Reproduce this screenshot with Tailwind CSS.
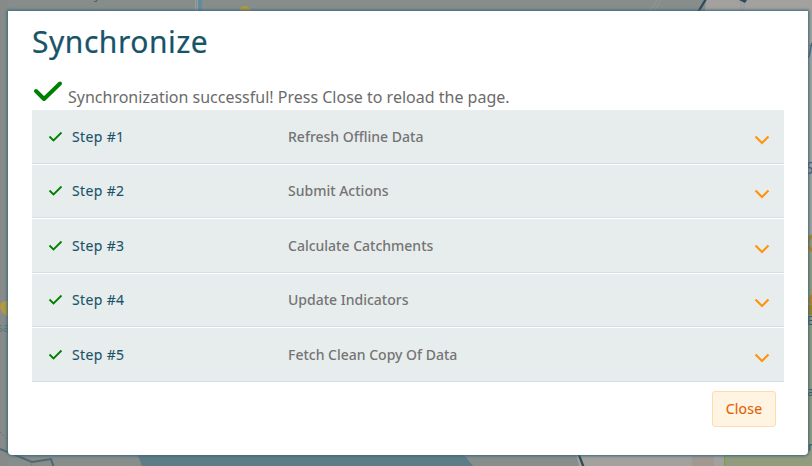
<!DOCTYPE html>
<html lang="en">
<head>
<meta charset="utf-8">
<title>Synchronize</title>
<script src="https://cdn.jsdelivr.net/npm/@tailwindcss/browser@4"></script>
</head>
<body class="relative h-[466px] w-[812px] overflow-hidden bg-[#868d8b] font-['Noto_Sans',sans-serif]">
<svg class="absolute inset-0" width="812" height="466" viewBox="0 0 812 466" aria-hidden="true">
  <path d="M706 0H812V240H806V466H579L572 440H660Z" fill="#a3a19d"/>
  <path d="M0 0H8V466H0Z" fill="#868b89"/>
  <path d="M692 455h22v11h-22z" fill="#a09891"/>
  <path d="M724 450H812V236H806V450" fill="#929b7d"/>
  <path d="M724 450H812V466H724Z" fill="#929b7d"/>
  <path d="M724.5 450v16" stroke="#74a33b"/>
  <path d="M136 450H460L473 466H142Z" fill="#5d7c86"/>
  <path d="M200 0v12" stroke="#628c9c" stroke-width="4"/>
  <path d="M195.500 0v12M197.500 0v12" stroke="#999fa7" stroke-width=".8"/>
  <path d="M706 -1L695 17M577 450L584 468" stroke="#2b4a5a" stroke-width="2.200" fill="none"/>
  <path d="M657 0L648 15M661 0L652 15M741 0v14M744 0v14" stroke="#92979e" fill="none"/>
  <path d="M739 0h8l-2 3z" fill="#2b4a5a"/>
  <circle cx="245" cy="11.500" r="5.500" fill="#b39a3f"/>
  <path d="M8 301Q0 300 0 307Q0 311 8 317Z" fill="#b39a3f"/>
  <path d="M0 449L32 462L51 459L54 468" stroke="#4e6870" stroke-width="2" fill="none"/>
  <path d="M0 432L35 468" stroke="#77727c" stroke-dasharray="2 2" fill="none"/>
  <path d="M812 236Q807 238 808 246L812 251M812 295Q808 302 812 304" stroke="#b57d1f" stroke-width="3" fill="none"/>
  <path d="M808 305h4v10h-4z" fill="#a0801b"/>
  <path d="M812 235Q808 235 808 239" stroke="#74a33b" fill="none"/>
  <g font-size="13" fill="#426078">
    <text x="-3" y="332" font-size="12" fill="#5f777e">sa</text>
    <text x="94" y="-1" font-size="13">y</text>
    <text x="808" y="54" font-size="16" font-style="italic">f</text>
    <text x="805" y="174" font-size="16" font-style="italic">5</text>
    <text x="807" y="325" font-size="12" fill="#2f5574">E</text>
    <text x="807" y="396" font-size="12" fill="#2f5574">a</text>
    <text x="808" y="451" font-size="12" fill="#2f5574">n</text>
  </g>
</svg>

<main class="absolute left-2 top-[11px] flex h-[444px] w-[800px] flex-col rounded-b bg-white px-6 shadow-[0_0_3px_1px_#39677b]">
  <h1 class="mt-[11px] h-10 text-[30px] leading-10 font-normal tracking-[0.53px] text-[#195369] [-webkit-text-stroke:0.2px_#195369]">Synchronize</h1>
  <div class="mt-[14px] flex h-[34px] text-base text-[#6b6b6b]">
    <svg class="mr-[4px] h-8 w-8 shrink-0" viewBox="0 0 32 32" fill="none" stroke="#008000" stroke-width="4" stroke-linecap="round" stroke-linejoin="round"><path d="M4 15L12 23L28 7.500"/></svg>
    <p class="pt-[9px] leading-6">Synchronization successful! Press Close to reload the page.</p>
  </div>
  <div id="steps" class="flex flex-col gap-px"></div>
  <div class="mt-[9px] mr-2 flex justify-end">
    <button class="h-9 w-16 rounded-[3px] border border-[#fddcae] bg-[#fff3e2] text-sm font-normal tracking-[0.2px] text-[#e06000] [-webkit-text-stroke:0.1px_#e06000]">Close</button>
  </div>
</main>
<script>
const steps = ['Refresh Offline Data', 'Submit Actions', 'Calculate Catchments', 'Update Indicators', 'Fetch Clean Copy Of Data'];
document.getElementById('steps').innerHTML = steps.map((name, i) => `
  <div class="flex h-[53.5px] items-center border-b border-[#d2e0e6] bg-[#e7eded] pt-px pr-[14px] pl-4 text-sm">
    <svg class="mr-2 h-4 w-4" viewBox="0 0 16 16" fill="none" stroke="#008000" stroke-width="1.800"><path d="M1.500 7.500L5.500 11.500L13.500 3.500"/></svg>
    <span class="w-[216px] tracking-[0.35px] text-[#195369] [-webkit-text-stroke:0.1px_#195369]">Step #${i + 1}</span>
    <span class="grow font-medium text-[#747474]">${name}</span>
    <svg class="mt-[6px] h-4 w-4" viewBox="0 0 16 16" fill="none" stroke="#ff9410" stroke-width="2.200"><path d="M1.500 4.500L8 11L14.500 4.500"/></svg>
  </div>`).join('');
</script>
</body>
</html>
